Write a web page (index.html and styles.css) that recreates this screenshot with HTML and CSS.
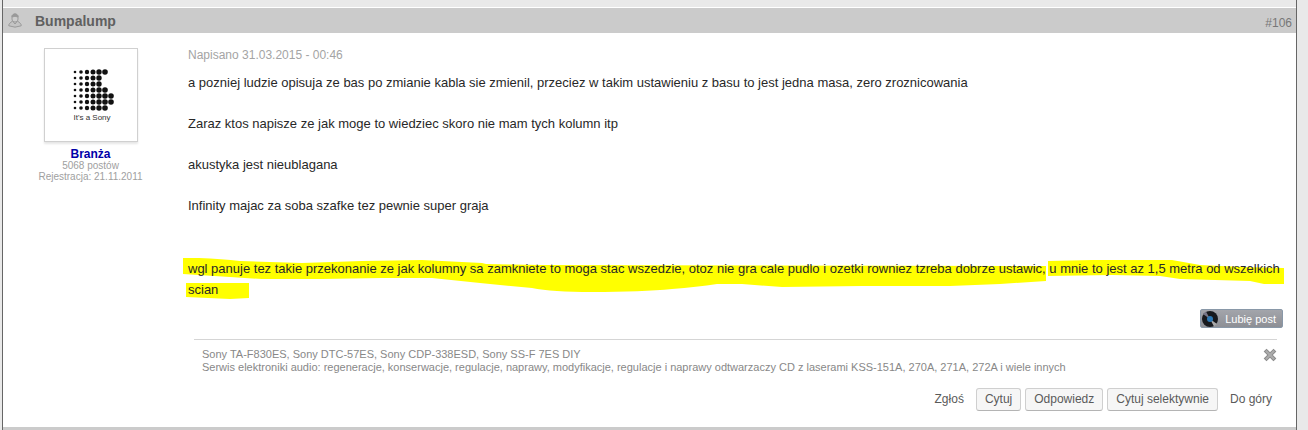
FILE: index.html
```html
<!DOCTYPE html>
<html lang="pl">
<head>
  <meta charset="UTF-8">
  <meta name="viewport" content="width=device-width, initial-scale=1.0">
  <title>Bumpalump - post #106</title>
  <link rel="stylesheet" href="styles.css">
</head>
<body>
  <main class="thread">
    <article class="post">
      <header class="post-header">
        <svg class="user-icon" width="14" height="15" viewBox="0 0 14 15" fill="none" stroke="#999" stroke-width="1">
          <path d="M4 3.500C4 .2 10 .2 10 3.500V6C10 10 4 10 4 6Z" fill="#ccc"/>
          <path d="M4 4C4 0 10 0 10 4Q7 2.500 4 4Z" fill="#999"/>
          <path d="M4.500 8L1.500 10.500Q.5 12 .8 12.800Q7 15.500 13.200 12.800Q13.500 12 12.500 10.500L9.500 8L7 11Z" fill="#c4c4c4"/>
        </svg>
        <h3 class="author">Bumpalump</h3>
        <a class="post-number" href="#">#106</a>
      </header>

      <div class="post-wrap">
        <!-- User info -->
        <aside class="user-info">
          <a class="avatar" href="#" aria-label="Bumpalump">
            <svg width="92" height="92" viewBox="0 0 92 92">
              <defs>
                <g id="dots">
                  <circle cx="30" cy="0" r="1.300"/>
                  <circle cx="36" cy="0" r="1.800"/>
                  <circle cx="42" cy="0" r="2.200"/>
                  <circle cx="48" cy="0" r="2.500"/>
                  <circle cx="54" cy="0" r="2.700"/>
                </g>
              </defs>
              <g fill="#111">
                <use href="#dots" y="23"/><circle cx="60" cy="23" r="2.800"/>
                <use href="#dots" y="29"/>
                <use href="#dots" y="35"/>
                <use href="#dots" y="41"/><circle cx="60" cy="41" r="2.800"/>
                <use href="#dots" y="47"/><circle cx="60" cy="47" r="2.800"/><circle cx="66" cy="47" r="2.800"/>
                <use href="#dots" y="53"/><circle cx="60" cy="53" r="2.800"/><circle cx="66" cy="53" r="2.800"/>
                <use href="#dots" y="59"/><circle cx="60" cy="59" r="2.800"/>
              </g>
              <text class="avatar-text" x="47" y="71" text-anchor="middle">It's a Sony</text>
            </svg>
          </a>
          <p class="group">Branża</p>
          <p class="user-details">5068 postów</p>
          <p class="user-details">Rejestracja: 21.11.2011</p>
        </aside>

        <div class="post-body">
          <p class="posted">Napisano 31.03.2015 - 00:46</p>

          <div class="message">
            <p>a pozniej ludzie opisuja ze bas po zmianie kabla sie zmienil, przeciez w takim ustawieniu z basu to jest jedna masa, zero zroznicowania</p>
            <p>Zaraz ktos napisze ze jak moge to wiedziec skoro nie mam tych kolumn itp</p>
            <p>akustyka jest nieublagana</p>
            <p>Infinity majac za soba szafke tez pewnie super graja</p>
            <p class="marked">
              <svg class="marker" width="1104" height="46" viewBox="0 0 1104 46" fill="#ffff00">
                <path d="M1 3L17 3Q40 4 58 6L120 8L180 6L240 5L300 8L304 9L360 10L864 11L864 26L818 29L768 31L680 31L600 32L560 29L535 29Q515 32 490 34Q460 37 410 37Q370 37 350 33L298 28L250 23L200 23L140 24L80 24L48 22L1 19Z"/>
                <path d="M866 6L910 5L990 5L1018 10L1060 12L1102 13L1102 29L1082 29L1068 26L998 24L978 21L930 20L866 21Z"/>
                <path d="M4 28L67 28L67 43L48 44L4 42Z"/>
              </svg>
              <span class="marked-text">wgl panuje tez takie przekonanie ze jak kolumny sa zamkniete to moga stac wszedzie, otoz nie gra cale pudlo i ozetki rowniez tzreba dobrze ustawic, u mnie to jest az 1,5 metra od wszelkich scian</span>
            </p>
          </div>

          <div class="like-row">
            <button type="button" class="like">
              <svg width="18" height="18" viewBox="0 0 18 18">
                <circle cx="9" cy="9" r="8" fill="#17191d"/>
                <path d="M9 9L2 4L5 1.500Z" fill="#778"/>
                <path d="M9 9L16 14L13 16.500Z" fill="#a9a9a9"/>
                <circle cx="9" cy="9" r="3" fill="#2c78b4"/>
              </svg>
              Lubię post
            </button>
          </div>

          <div class="signature">
            <p>Sony TA-F830ES, Sony DTC-57ES, Sony CDP-338ESD, Sony SS-F 7ES DIY<br>
            Serwis elektroniki audio: regeneracje, konserwacje, regulacje, naprawy, modyfikacje, regulacje i naprawy odtwarzaczy CD z laserami KSS-151A, 270A, 271A, 272A i wiele innych</p>
            <button type="button" class="hide-signature" aria-label="Ukryj sygnaturę">
              <svg width="14" height="14" viewBox="0 0 14 14" fill="none" stroke-linecap="square">
                <path d="M3.500 3.500L10.500 10.500M10.500 3.500L3.500 10.500" stroke="#8c8c8c" stroke-width="4"/>
                <path d="M3.500 3.500L10.500 10.500M10.500 3.500L3.500 10.500" stroke="#acacac" stroke-width="2"/>
              </svg>
            </button>
          </div>
        </div>
      </div>

      <!-- Post controls -->
      <footer class="controls">
        <a class="control" href="#">Zgłoś</a>
        <button type="button" class="control boxed">Cytuj</button>
        <button type="button" class="control boxed">Odpowiedz</button>
        <button type="button" class="control boxed">Cytuj selektywnie</button>
        <a class="control" href="#">Do góry</a>
      </footer>
    </article>
    <div class="next-header"></div>
  </main>
</body>
</html>
```

FILE: styles.css
```css
/* General Styling */
* {
    box-sizing: border-box;
}

body {
    margin: 0;
    background-color: #e9e9e9;
    font-family: "Liberation Sans", Arial, sans-serif;
    font-size: 13px;
    color: #282828;
}

p, h3 {
    margin: 0;
}

a {
    color: inherit;
    text-decoration: none;
}

button {
    font-family: inherit;
    cursor: pointer;
}

svg {
    display: block;
}

.thread {
    margin: 0 11px 0 2px;
    padding-top: 7px;
    border-left: 1px solid #666;
    border-right: 1px solid #666;
}

.post {
    background: #fff;
    border-top: 1px solid #fff;
}

/* Header */
.post-header {
    display: flex;
    align-items: center;
    height: 25px;
    padding: 0 4px 0 5px;
    background: #cbcbcb;
}

.author {
    flex-grow: 1;
    margin-left: 13px;
    font-size: 14px;
    color: #606060;
}

.post-number {
    padding-top: 4px;
    font-size: 12px;
    color: #777;
}

.post-wrap {
    display: flex;
}

/* User info */
.user-info {
    width: 175px;
    flex-shrink: 0;
    padding-top: 15px;
    text-align: center;
}

.avatar {
    display: block;
    width: 94px;
    margin: 0 auto 6px;
    border: 1px solid #d0d0d0;
    box-shadow: 0 2px 2px rgba(0, 0, 0, 0.1);
}

.avatar-text {
    font-size: 8px;
    fill: #333;
}

.group {
    font-size: 12px;
    line-height: 12px;
    font-weight: bold;
    color: #0000a8;
}

.user-details {
    font-size: 10px;
    line-height: 11px;
    color: #a0a0a0;
}

/* Message */
.post-body {
    flex-grow: 1;
    min-width: 0;
    padding: 14px 13px 0 10px;
}

.posted {
    font-size: 12px;
    line-height: 16px;
    color: #a4a4a4;
}

.message {
    padding-top: 9px;
    line-height: 21px;
}

.message p + p {
    margin-top: 20px;
}

.message p.marked {
    position: relative;
    margin-top: 42px;
}

.marker {
    position: absolute;
    top: -3px;
    left: -6px;
}

.marked-text {
    position: relative;
}

.like-row {
    display: flex;
    justify-content: flex-end;
    padding-top: 9px;
}

.like {
    display: flex;
    align-items: center;
    gap: 6px;
    height: 19px;
    padding: 0 6px 0 0;
    border: 1px solid #8998a8;
    border-radius: 2px;
    background: linear-gradient(#a3a5ab, #8d8f95);
    color: #fff;
    font-size: 11px;
}

/* Signature */
.signature {
    display: flex;
    justify-content: space-between;
    align-items: flex-start;
    margin: 11px 6px 0 6px;
    padding: 8px 0 0 8px;
    border-top: 1px solid #d5d5d5;
    font-size: 11px;
    line-height: 13px;
    color: #888;
}

.hide-signature {
    padding: 0;
    border: 0;
    background: none;
}

/* Controls */
.controls {
    display: flex;
    justify-content: flex-end;
    gap: 4px;
    padding: 14px 16px 16px 0;
}

.control {
    height: 23px;
    padding: 0 8px;
    font-size: 12px;
    line-height: 23px;
    color: #5a5a5a;
}

.boxed {
    line-height: 21px;
    border: 1px solid #cfcfcf;
    border-bottom-color: #b4b4b4;
    border-radius: 3px;
    background: #f6f6f6;
}

.boxed:hover {
    background: #eee;
}

.next-header {
    height: 3px;
    background: #cbcbcb;
}
```
